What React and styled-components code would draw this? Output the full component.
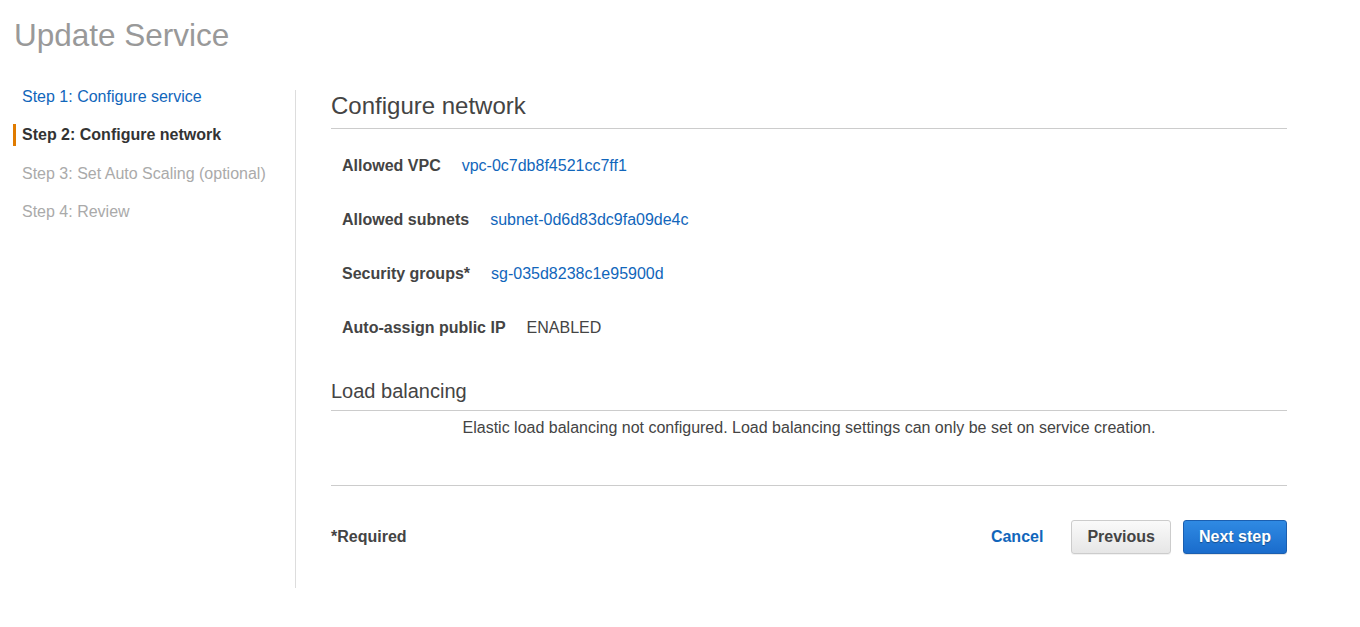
import React from "react";
import styled, { createGlobalStyle } from "styled-components";

const GlobalStyle = createGlobalStyle`
  html, body {
    margin: 0;
    padding: 0;
    background: #ffffff;
  }
  body {
    font-family: "Liberation Sans", Arial, sans-serif;
    color: #444444;
  }
`;

const steps = [
  { label: "Step 1: Configure service", state: "done" },
  { label: "Step 2: Configure network", state: "active" },
  { label: "Step 3: Set Auto Scaling (optional)", state: "todo" },
  { label: "Step 4: Review", state: "todo" },
];

const network = [
  { label: "Allowed VPC", value: "vpc-0c7db8f4521cc7ff1", link: true },
  { label: "Allowed subnets", value: "subnet-0d6d83dc9fa09de4c", link: true },
  { label: "Security groups*", value: "sg-035d8238c1e95900d", link: true },
  { label: "Auto-assign public IP", value: "ENABLED", link: false },
];

export default function App() {
  return (
    <Page>
      <GlobalStyle />
      <Title>Update Service</Title>
      <Body>
        <Sidebar>
          {steps.map((s) => (
            <Step key={s.label} state={s.state}>
              {s.label}
            </Step>
          ))}
        </Sidebar>
        <Main>
          <Heading>Configure network</Heading>
          <Rows>
            {network.map((r) => (
              <Row key={r.label}>
                <Label>{r.label}</Label>
                <Value link={r.link}>{r.value}</Value>
              </Row>
            ))}
          </Rows>
          <SubHeading>Load balancing</SubHeading>
          <Notice>
            Elastic load balancing not configured. Load balancing settings can
            only be set on service creation.
          </Notice>
          <Footer>
            <Required>*Required</Required>
            <Actions>
              <CancelLink>Cancel</CancelLink>
              <Button>Previous</Button>
              <Button primary>Next step</Button>
            </Actions>
          </Footer>
        </Main>
      </Body>
    </Page>
  );
}

const Page = styled.div`
  width: 1360px;
  min-height: 627px;
`;

const Title = styled.h1`
  margin: 0 0 33px;
  padding: 17px 0 0 14px;
  font-size: 31.5px;
  line-height: 36px;
  font-weight: normal;
  color: #999999;
`;

const Body = styled.div`
  display: flex;
  align-items: flex-start;
`;

const Sidebar = styled.ul`
  list-style: none;
  margin: 0;
  padding: 0 0 0 13px;
  width: 282px;
  flex-shrink: 0;
`;

const Step = styled.li`
  font-size: 16px;
  line-height: 22px;
  padding-left: 6px;
  margin-bottom: 16.4px;
  border-left: 3px solid
    ${(p) => (p.state === "active" ? "#e07b00" : "transparent")};
  font-weight: ${(p) => (p.state === "active" ? "bold" : "normal")};
  color: ${(p) =>
    p.state === "done" ? "#1166bb" : p.state === "active" ? "#333333" : "#aaaaaa"};
`;

const Main = styled.div`
  margin-top: 4px;
  border-left: 1px solid #dddddd;
  padding: 0 0 34px 35px;
  width: 956px;
`;

const Heading = styled.h2`
  margin: 2px 0 0;
  font-size: 24px;
  line-height: 28px;
  font-weight: normal;
  color: #444444;
  padding-bottom: 8px;
  border-bottom: 1px solid #cccccc;
`;

const Rows = styled.div`
  display: flex;
  flex-direction: column;
  gap: 34px;
  padding: 27px 0 0 11px;
`;

const Row = styled.div`
  display: flex;
  gap: 21px;
  font-size: 16px;
  line-height: 20px;
`;

const Label = styled.span`
  font-weight: bold;
  color: #444444;
`;

const Value = styled.span`
  color: ${(p) => (p.link ? "#1166bb" : "#444444")};
`;

const SubHeading = styled.h3`
  margin: 41px 0 0;
  font-size: 20px;
  line-height: 24px;
  font-weight: normal;
  color: #444444;
  padding-bottom: 7px;
  border-bottom: 1px solid #cccccc;
`;

const Notice = styled.p`
  margin: 0;
  padding: 7px 0 47px;
  font-size: 16px;
  line-height: 20px;
  text-align: center;
  color: #444444;
  border-bottom: 1px solid #cccccc;
`;

const Footer = styled.div`
  display: flex;
  align-items: center;
  justify-content: space-between;
  padding-top: 34px;
`;

const Required = styled.span`
  font-size: 16px;
  font-weight: bold;
  color: #444444;
`;

const Actions = styled.div`
  display: flex;
  align-items: center;
  gap: 12px;
`;

const CancelLink = styled.span`
  font-size: 16px;
  font-weight: bold;
  color: #1166bb;
  margin-right: 16px;
  cursor: pointer;
`;

const Button = styled.button`
  height: 34px;
  padding: 0 15px;
  font-family: "Liberation Sans", Arial, sans-serif;
  font-size: 16px;
  font-weight: bold;
  border-radius: 3px;
  cursor: pointer;
  border: 1px solid ${(p) => (p.primary ? "#1b5fb0" : "#cccccc")};
  color: ${(p) => (p.primary ? "#ffffff" : "#444444")};
  text-shadow: ${(p) =>
    p.primary ? "0 1px 1px rgba(0,0,0,0.35)" : "none"};
  background: ${(p) =>
    p.primary
      ? "linear-gradient(to bottom, #2f8ae3, #1a6ccc)"
      : "linear-gradient(to bottom, #fafafa, #e6e6e6)"};
  box-shadow: ${(p) =>
    p.primary ? "0 1px 0 rgba(0,0,0,0.1)" : "0 1px 0 rgba(0,0,0,0.05)"};
`;
